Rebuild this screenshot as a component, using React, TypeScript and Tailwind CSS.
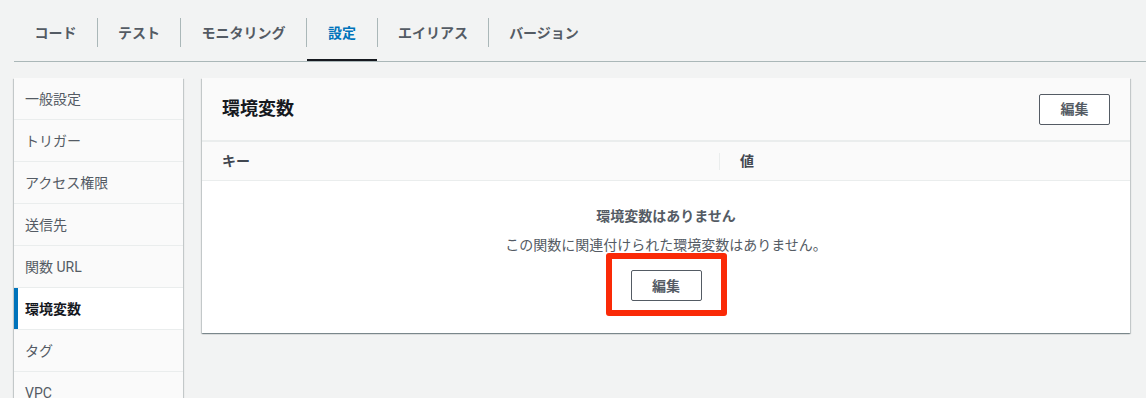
import React from "react";

const tabs = [
  { t: "コード", w: "w-[83px]" },
  { t: "テスト", w: "w-[82px]" },
  { t: "モニタリング", w: "w-[125px]" },
  { t: "設定", w: "w-[70px]" },
  { t: "エイリアス", w: "w-[110px]" },
  { t: "バージョン", w: "w-[110px]" },
];
const sideItems = ["一般設定", "トリガー", "アクセス権限", "送信先", "関数 URL", "環境変数", "タグ", "VPC"];

const shadow =
  "shadow-[0_1px_1px_0_rgba(0,28,36,0.3),1px_1px_1px_0_rgba(0,28,36,0.15),-1px_1px_1px_0_rgba(0,28,36,0.15)]";

export default function App() {
  return (
    <div className="h-[398px] w-[1146px] overflow-hidden bg-[#f2f3f3] font-['Roboto','Noto_Sans_CJK_JP',sans-serif] text-[14px] text-[#16191f]">
      {/* Tabs */}
      <div className="ml-[14px] mr-0 pt-[18px] border-b border-[#aab7b8] flex">
        {tabs.map(({ t, w }, i) => (
          <React.Fragment key={t}>
            {i > 0 && <div className="w-px h-[29px] bg-[#aab7b8]" />}
            <div className={`flex flex-col ${w}`}>
              <div
                className={`h-[29px] flex items-center justify-center font-bold leading-[20px] ${
                  t === "設定" ? "text-[#0073bb]" : "text-[#545b64]"
                }`}
              >
                {t}
              </div>
              <div className="h-[12px]" />
              <div className={`h-[2px] ${t === "設定" ? "bg-[#16191f]" : ""}`} />
            </div>
          </React.Fragment>
        ))}
      </div>

      <div className="flex pl-[14px] pr-[16px] pt-[16px] gap-[19px] items-start">
        {/* Sidebar */}
        <div className={`w-[169px] shrink-0 bg-[#eaeded] ${shadow}`}>
          {sideItems.map((s) => {
            const active = s === "環境変数";
            return (
              <div
                key={s}
                className={`relative h-[41px] mb-px flex items-center pl-[11px] leading-[20px] ${
                  active ? "bg-white font-bold text-[#16191f]" : "bg-[#fafafa] text-[#545b64]"
                }`}
              >
                {active && <div className="absolute left-0 top-0 bottom-0 w-[4px] bg-[#0073bb]" />}
                {s}
              </div>
            );
          })}
        </div>

        {/* Panel */}
        <div className={`flex-1 bg-white ${shadow}`}>
          <div className="h-[64px] bg-[#fafafa] flex items-center justify-between px-[20px] border-b-2 border-[#eaeded]">
            <div className="text-[18px] font-bold leading-[24px] text-[#16191f]">環境変数</div>
            <button className="w-[71px] h-[31px] border border-[#545b64] rounded-[2px] bg-white text-[#545b64] font-bold leading-[20px] flex items-center justify-center">
              編集
            </button>
          </div>
          <div className="h-[39px] bg-[#fafafa] border-b border-[#eaeded] flex items-center font-bold text-[#414750] leading-[20px]">
            <div className="w-[518px] pl-[20px] flex items-center justify-between">
              <span>キー</span>
              <div className="w-px h-[17px] bg-[#eaeded]" />
            </div>
            <div className="pl-[20px]">値</div>
          </div>
          <div className="flex flex-col items-center pt-[25px] pb-[32px]">
            <div className="font-bold text-[#545b64] leading-[20px]">環境変数はありません</div>
            <div className="mt-[9px] text-[#545b64] leading-[20px]">
              この関数に関連付けられた環境変数はありません。
            </div>
            <div className="relative mt-[15px]">
              <button className="w-[71px] h-[31px] border border-[#545b64] rounded-[2px] bg-white text-[#545b64] font-bold leading-[20px] flex items-center justify-center">
                編集
              </button>
              <div className="absolute left-[-25px] top-[-17px] w-[121px] h-[63px] border-[6px] border-[#fa2a07] rounded-[3px] pointer-events-none" />
            </div>
          </div>
        </div>
      </div>
    </div>
  );
}
